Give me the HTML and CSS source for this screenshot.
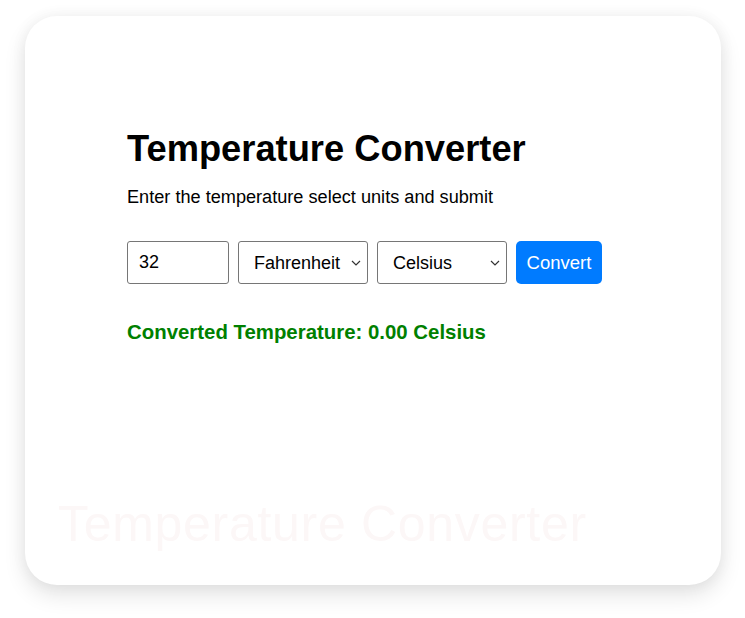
FILE: index.html
```html
<!DOCTYPE html>
<html lang="en">
<head>
<meta charset="utf-8">
<title>Temperature Converter</title>
<link rel="stylesheet" href="styles.css">
</head>
<body>
<div class="card">
  <div class="content">
    <h1 class="title">Temperature Converter</h1>
    <p class="subtitle">Enter the temperature select units and submit</p>
    <form class="row">
      <input class="field num" type="text" value="32">
      <select class="field sel sel-from">
        <option>Fahrenheit</option>
        <option>Celsius</option>
        <option>Kelvin</option>
      </select>
      <select class="field sel sel-to">
        <option>Celsius</option>
        <option>Fahrenheit</option>
        <option>Kelvin</option>
      </select>
      <button class="btn" type="button">Convert</button>
    </form>
    <p class="result">Converted Temperature: 0.00 Celsius</p>
  </div>
  <div class="watermark">Temperature Converter</div>
</div>
</body>
</html>
```

FILE: styles.css
```css
* { box-sizing: border-box; }
html, body { margin: 0; padding: 0; background: #ffffff; }
body {
  font-family: "Liberation Sans", Arial, sans-serif;
  color: #000;
  padding: 16px 24px 40px 25px;
}
.card {
  width: 696px;
  height: 569px;
  background: #fff;
  border-radius: 32px;
  box-shadow: 0 10px 22px rgba(0,0,0,0.11), 0 0 16px rgba(0,0,0,0.05);
  display: flex;
  flex-direction: column;
  overflow: hidden;
}
.content {
  padding: 112px 0 0 102px;
}
.title {
  margin: 0;
  font-size: 36.3px;
  font-weight: 700;
  line-height: 42px;
}
.subtitle {
  margin: 16px 0 0;
  font-size: 18.15px;
  line-height: 22px;
}
.row {
  display: flex;
  gap: 9px;
  margin-top: 33px;
  height: 43px;
}
.field {
  height: 43px;
  border: 1px solid #767676;
  border-radius: 3px;
  background: #fff;
  font-family: inherit;
  font-size: 18px;
  color: #000;
  outline: none;
}
.num {
  width: 102px;
  padding: 0 11px;
}
.sel {
  appearance: none;
  -webkit-appearance: none;
  padding: 0 0 0 15px;
  background-image: url("data:image/svg+xml,%3Csvg xmlns='http://www.w3.org/2000/svg' width='10' height='6' viewBox='0 0 10 6'%3E%3Cpath d='M1 1l4 4 4-4' fill='none' stroke='%23333' stroke-width='1.2'/%3E%3C/svg%3E");
  background-repeat: no-repeat;
  background-position: right 6px center;
  background-size: 10px 6px;
}
.sel-from { width: 130px; }
.sel-to { width: 130px; }
.btn {
  width: 86px;
  height: 43px;
  border: none;
  border-radius: 5px;
  background: #007bff;
  color: #fff;
  font-family: inherit;
  font-size: 18.5px;
  padding: 0;
}
.result {
  margin: 36px 0 0;
  font-size: 20.4px;
  font-weight: 700;
  color: #008000;
  line-height: 24px;
}
.watermark {
  margin-top: auto;
  padding: 0 0 33px 33px;
  font-size: 50px;
  letter-spacing: 0.7px;
  line-height: 56px;
  color: #fcf7f7;
}
```
